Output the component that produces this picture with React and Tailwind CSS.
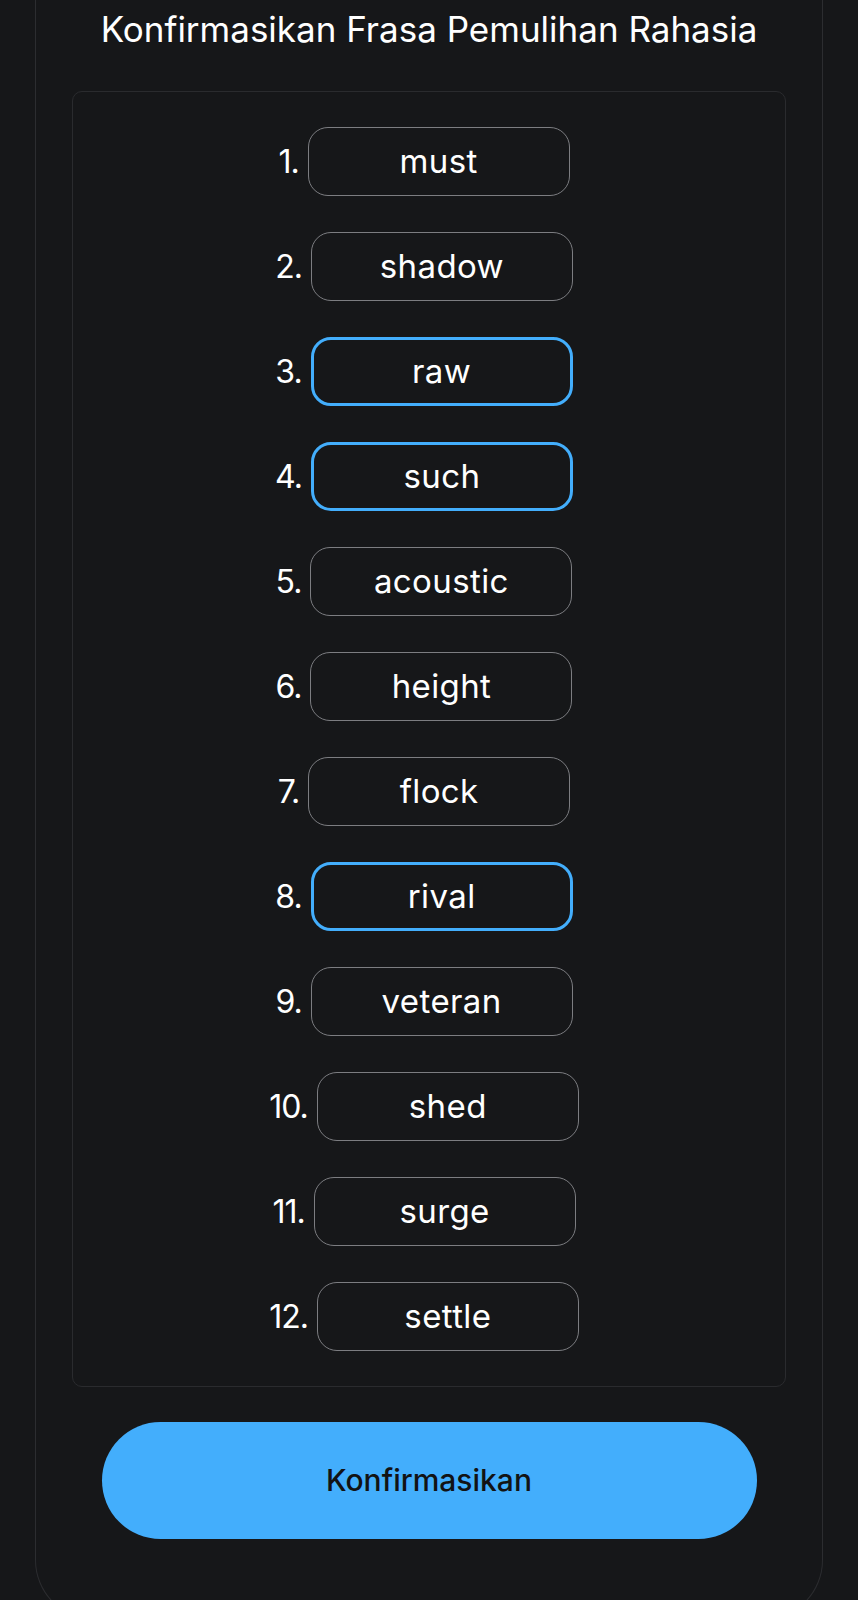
import React from "react";

const words = [
  { n: 1, w: "must" },
  { n: 2, w: "shadow" },
  { n: 3, w: "raw", active: true },
  { n: 4, w: "such", active: true },
  { n: 5, w: "acoustic" },
  { n: 6, w: "height" },
  { n: 7, w: "flock" },
  { n: 8, w: "rival", active: true },
  { n: 9, w: "veteran" },
  { n: 10, w: "shed" },
  { n: 11, w: "surge" },
  { n: 12, w: "settle" },
];

function WordRow({ n, w, active }) {
  return (
    <div className="flex items-center justify-center pr-[10px]">
      <span className="mr-[9px] text-[32px] leading-none tracking-[-1px] text-white">{n}.</span>
      <div
        className={
          active
            ? "flex h-[69px] w-[262px] items-center justify-center rounded-[20px] border-[3px] border-[#43aefc] text-[33px] tracking-[0.4px] text-white"
            : "flex h-[69px] w-[262px] items-center justify-center rounded-[20px] border border-[#7c7d81] text-[33px] tracking-[0.4px] text-white"
        }
      >
        {w}
      </div>
    </div>
  );
}

export default function App() {
  return (
    <div
      className="h-[1600px] overflow-hidden bg-[#161719] [font-variant-ligatures:none]"
      style={{ fontFamily: "Inter, 'Noto Sans', sans-serif" }}
    >
      <div className="mx-[35px] flex h-[1620px] flex-col items-center rounded-b-[60px] border border-t-0 border-[#2c2d30]">
        <h1 className="pt-[9px] text-[35px] leading-[40px] text-white">
          Konfirmasikan Frasa Pemulihan Rahasia
        </h1>

        <div className="mt-[42px] flex w-[714px] flex-col gap-[36px] rounded-[10px] border border-[#2a2b2e] py-[35px]">
          {words.map((item) => (
            <WordRow key={item.n} {...item} />
          ))}
        </div>

        <button className="mt-[35px] flex h-[117px] w-[655px] items-center justify-center rounded-full bg-[#43aefc] text-[30px] font-medium text-[#121314]">
          Konfirmasikan
        </button>
      </div>
    </div>
  );
}
